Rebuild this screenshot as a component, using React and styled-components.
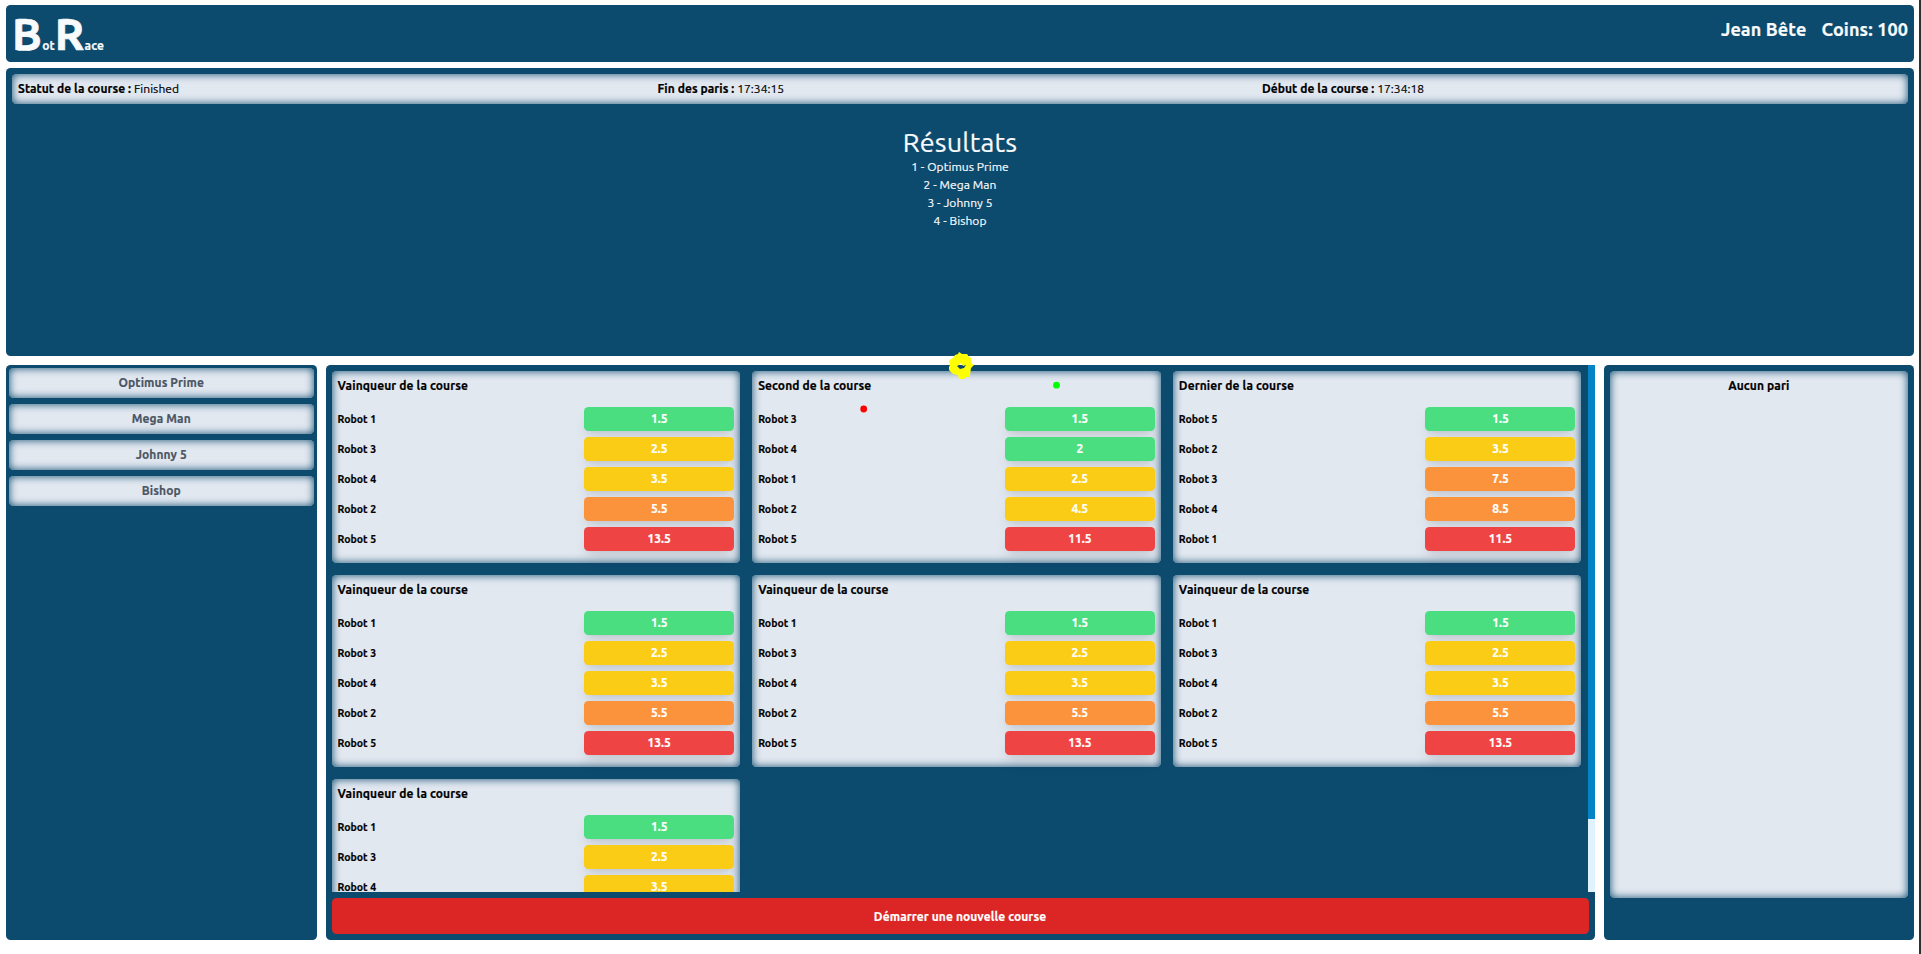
import React from "react";
import styled, { createGlobalStyle, css } from "styled-components";

const GlobalStyle = createGlobalStyle`
  *, *::before, *::after { box-sizing: border-box; }
  html { font-size: 12px; }
  body {
    margin: 0;
    background: #fff;
    color: #000;
    font-family: Ubuntu, "Noto Sans", sans-serif;
    font-size: 12px;
    line-height: 18px;
    letter-spacing: 0.1px;
    -webkit-text-stroke-width: 0.2px;
    overflow: hidden;
  }
`;

const panel = css`
  background: #0c4a6e;
  border-radius: 4.5px;
`;

const inset = css`
  background: #e2e8f0;
  border-radius: 4.5px;
  box-shadow: inset 0 0 8px #0c4a6e;
`;

const Page = styled.div`
  position: relative;
  display: flex;
  flex-direction: column;
  height: 954px;
  padding: 5px 5px 14px 6px;
  border-style: solid;
  border-image: linear-gradient(to right, #b8b8b8 50%, #303030 50%) 1;
  border-width: 0 2px 0 0;
`;

const Header = styled.header`
  ${panel}
  display: flex;
  justify-content: space-between;
  height: 57px;
  padding: 6px;
  color: #f8fafc;
  font-weight: 700;
`;

const Logo = styled.h1`
  display: flex;
  align-items: baseline;
  margin: 0;
  font-size: 12px;
  line-height: 45px;
`;

const Initial = styled.span`
  font-size: 45px;
  letter-spacing: 0.3px;
  -webkit-text-stroke-width: 0.7px;
`;

const LogoTail = styled.span`
  font-size: 12px;
`;

const Account = styled.div`
  display: flex;
  gap: 15px;
  font-size: 18px;
  line-height: 36px;
  letter-spacing: 0.12px;
`;

const Race = styled.section`
  ${panel}
  height: 288px;
  margin-top: 6px;
  padding: 6px;
`;

const InfoBar = styled.div`
  ${inset}
  display: flex;
  justify-content: space-between;
  height: 30px;
  padding: 6px;
  letter-spacing: 0.06px;
`;

const Info = styled.div`
  width: ${(p) => p.$width}px;
  white-space: nowrap;
`;

const Results = styled.div`
  margin-top: 23px;
  color: #f8fafc;
  text-align: center;
  letter-spacing: 0.06px;
`;

const ResultsTitle = styled.h2`
  margin: 0 0 1px;
  font-size: 27px;
  font-weight: 400;
  line-height: 30px;
  letter-spacing: 0.2px;
`;

const Lower = styled.main`
  display: grid;
  grid-template-columns: repeat(6, 1fr);
  gap: 9px;
  height: 575px;
  margin-top: 9px;
`;

const Robots = styled.aside`
  ${panel}
  display: flex;
  flex-direction: column;
  gap: 6px;
  padding: 3px;
`;

const RobotItem = styled.div`
  ${inset}
  height: 30px;
  color: #4b5563;
  font-weight: 700;
  line-height: 30px;
  text-align: center;
`;

const Center = styled.section`
  ${panel}
  grid-column: span 4;
  display: flex;
  flex-direction: column;
  min-height: 0;
`;

const Scroller = styled.div`
  display: flex;
  height: 527px;
  flex: none;
`;

const Cards = styled.div`
  flex: 1;
  display: grid;
  grid-template-columns: repeat(3, 1fr);
  grid-auto-rows: 192px;
  gap: 12px;
  padding: 6px;
  overflow: hidden;
`;

const Track = styled.div`
  width: 7px;
  background: #e0f2fe;
`;

const Thumb = styled.div`
  height: 454px;
  background: #0284c7;
`;

const Card = styled.article`
  ${inset}
  padding: 6px;
  font-weight: 700;
`;

const CardTitle = styled.h3`
  margin: 0 0 12px;
  font-size: 12px;
  line-height: 18px;
`;

const OddsRow = styled.div`
  display: flex;
  justify-content: space-between;
  align-items: center;
  margin-bottom: 6px;
  font-size: 10.5px;
  letter-spacing: 0;
`;

const tones = { green: "#4ade80", yellow: "#facc15", orange: "#fb923c", red: "#ef4444" };

const OddsButton = styled.button`
  width: 150px;
  height: 24px;
  padding: 0;
  border: 0;
  border-radius: 4.5px;
  background: ${(p) => tones[p.$tone]};
  box-shadow: 0 10px 15px -3px rgba(0, 0, 0, 0.1), 0 4px 6px -4px rgba(0, 0, 0, 0.1);
  color: #fff;
  font: 700 12px/24px Ubuntu, "Noto Sans", sans-serif;
`;

const StartButton = styled.button`
  height: 36px;
  margin: 6px;
  padding: 1px 0 0;
  border: 0;
  border-radius: 4.5px;
  background: #dc2626;
  color: #fff;
  font: 700 12px/35px Ubuntu, "Noto Sans", sans-serif;
  letter-spacing: 0.1px;
`;

const Bets = styled.aside`
  ${panel}
  padding: 6px;
`;

const BetList = styled.div`
  ${inset}
  height: 527px;
  padding: 6px;
  font-weight: 700;
  text-align: center;
`;

const Sparks = styled.svg`
  position: absolute;
  left: 850px;
  top: 345px;
  pointer-events: none;
`;

const winner = ["Vainqueur de la course", [[1, 1.5, "green"], [3, 2.5, "yellow"], [4, 3.5, "yellow"], [2, 5.5, "orange"], [5, 13.5, "red"]]];
const cards = [
  winner,
  ["Second de la course", [[3, 1.5, "green"], [4, 2, "green"], [1, 2.5, "yellow"], [2, 4.5, "yellow"], [5, 11.5, "red"]]],
  ["Dernier de la course", [[5, 1.5, "green"], [2, 3.5, "yellow"], [3, 7.5, "orange"], [4, 8.5, "orange"], [1, 11.5, "red"]]],
  winner, winner, winner, winner,
];
const robots = ["Optimus Prime", "Mega Man", "Johnny 5", "Bishop"];

export default function App() {
  return (
    <Page>
      <GlobalStyle />
      <Header>
        <Logo>
          <Initial>B</Initial><LogoTail>ot</LogoTail>
          <Initial>R</Initial><LogoTail>ace</LogoTail>
        </Logo>
        <Account><span>Jean Bête</span><span>Coins: 100</span></Account>
      </Header>
      <Race>
        <InfoBar>
          <Info $width={162}><b>Statut de la course :</b> Finished</Info>
          <Info $width={127}><b>Fin des paris :</b> 17:34:15</Info>
          <Info $width={640}><b>Début de la course :</b> 17:34:18</Info>
        </InfoBar>
        <Results>
          <ResultsTitle>Résultats</ResultsTitle>
          {robots.map((name, i) => <div key={name}>{i + 1} - {name}</div>)}
        </Results>
      </Race>
      <Lower>
        <Robots>{robots.map((name) => <RobotItem key={name}>{name}</RobotItem>)}</Robots>
        <Center>
          <Scroller>
            <Cards>
              {cards.map(([title, odds], i) => (
                <Card key={i}>
                  <CardTitle>{title}</CardTitle>
                  {odds.map(([robot, value, tone]) => (
                    <OddsRow key={robot}>
                      <span>Robot {robot}</span>
                      <OddsButton $tone={tone}>{value}</OddsButton>
                    </OddsRow>
                  ))}
                </Card>
              ))}
            </Cards>
            <Track><Thumb /></Track>
          </Scroller>
          <StartButton>Démarrer une nouvelle course</StartButton>
        </Center>
        <Bets><BetList>Aucun pari</BetList></Bets>
      </Lower>
      <Sparks width="220" height="75" viewBox="850 345 220 75">
        <path fill="#ff0" fillRule="evenodd" d="M955 355l3-1 1-2 3 2 5 0 2 3 2 1 0 5 3 2-3 3-1 7 0 2-4 0-2 2-5 0-1-4-5-1-4-4 0-3 1-2-1-4 2-2 2-1zM957 366l2-1 2-2 2 3 3-1-2 3-4 1z" />
        <circle cx="1056.5" cy="385.2" r="3.4" fill="#0f0" />
        <circle cx="863.7" cy="409" r="3.4" fill="#f00" />
      </Sparks>
    </Page>
  );
}
